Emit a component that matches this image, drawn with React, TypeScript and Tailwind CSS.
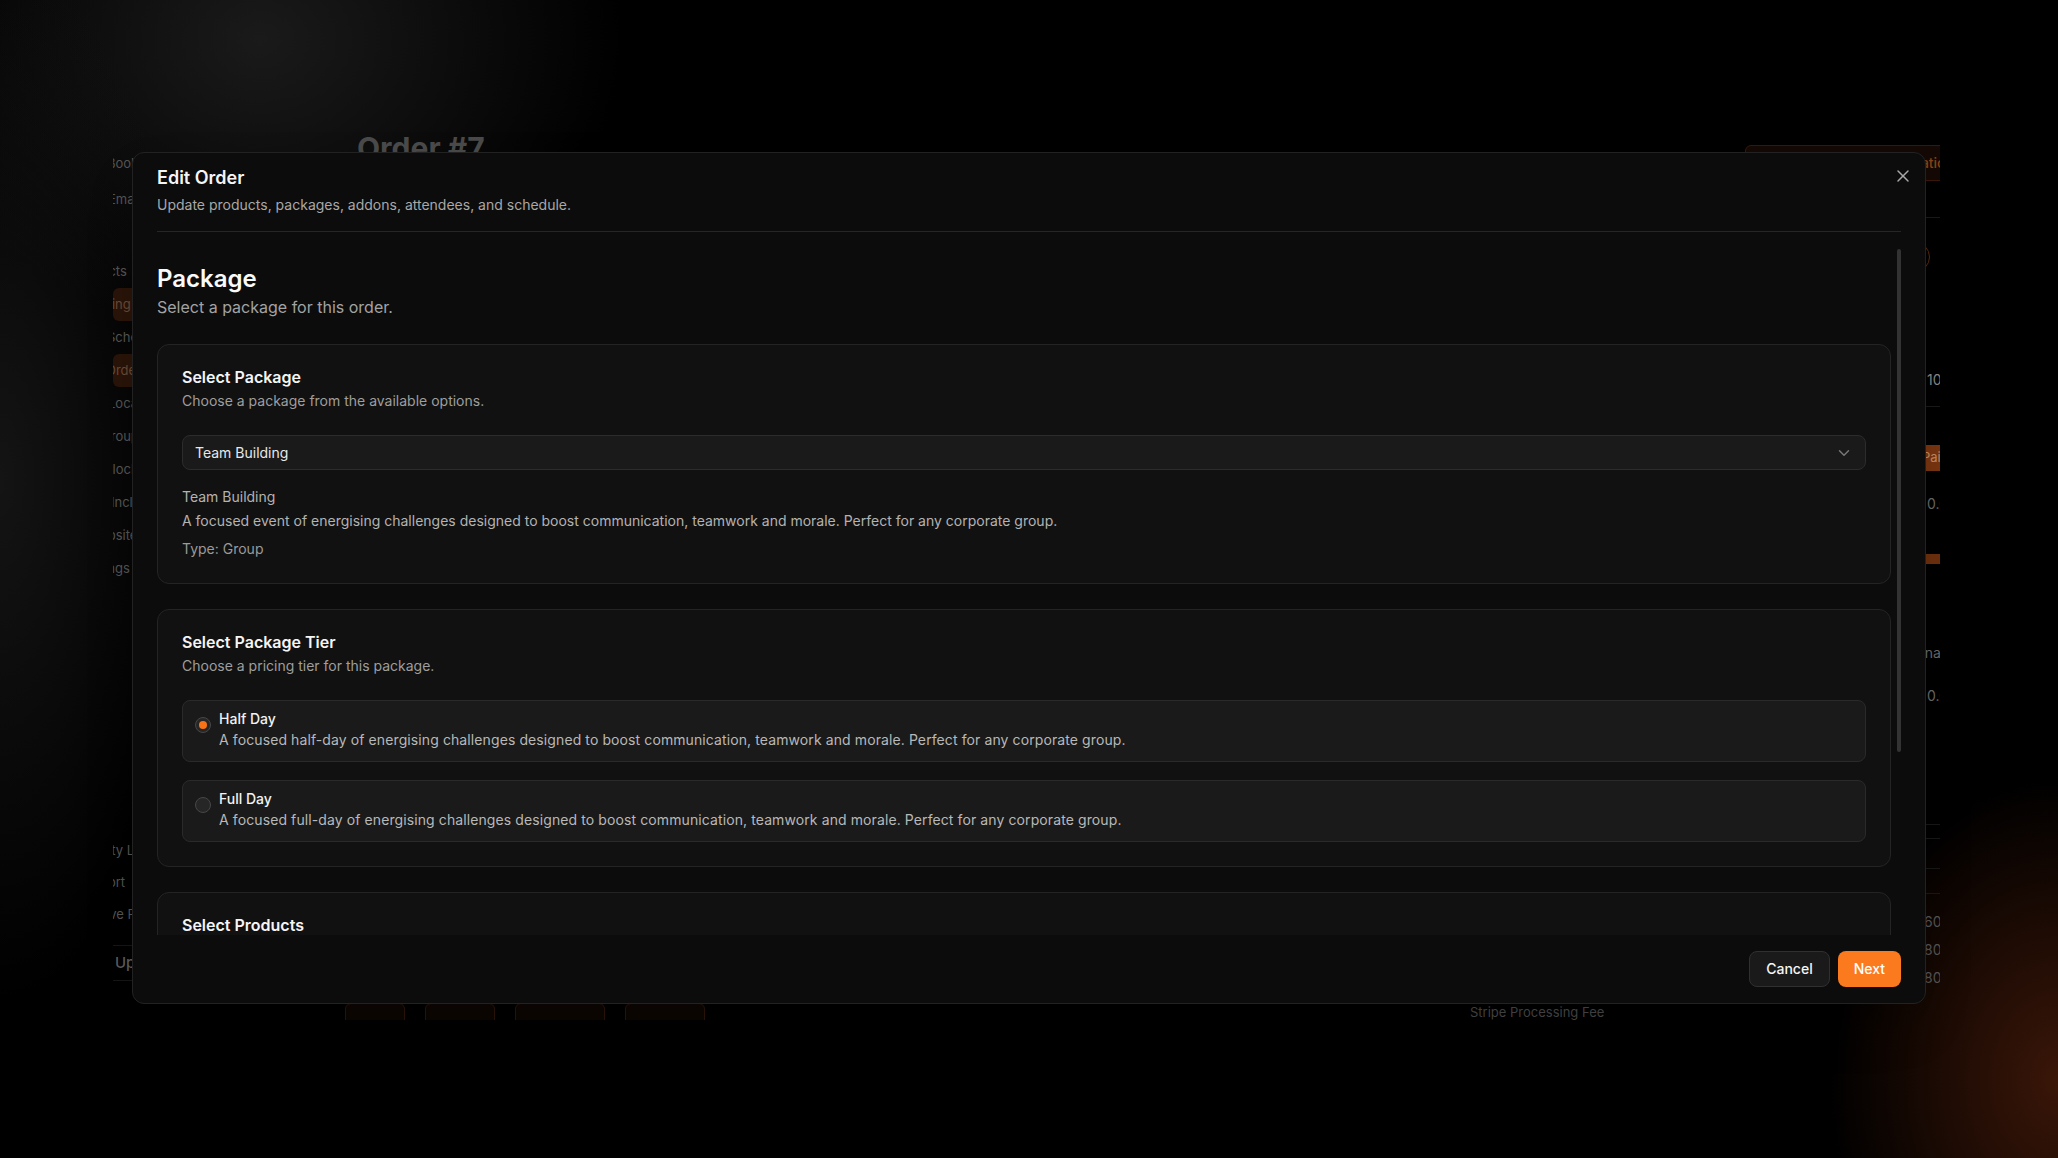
import { useState } from "react";
import { ChevronDown, X } from "lucide-react";

type NavItem = { label: string; shift: string; active?: boolean };

const NAV_TOP: NavItem[] = [
  { label: "Bookings", shift: "-ml-[8px]" },
  { label: "Emails", shift: "-ml-[7px]" },
];

const NAV_MAIN: NavItem[] = [
  { label: "Products", shift: "-ml-[43px]" },
  { label: "Pricing", shift: "-ml-[27px]", active: true },
  { label: "Schedule", shift: "-ml-[8px]" },
  { label: "Orders", shift: "-ml-[9px]", active: true },
  { label: "Locations", shift: "-ml-[7px]" },
  { label: "Groups", shift: "-ml-[14px]" },
  { label: "Blocks", shift: "-ml-[11px]" },
  { label: "Includes", shift: "-ml-[4px]" },
  { label: "Website", shift: "-ml-[27px]" },
  { label: "Settings", shift: "-ml-[35px]" },
];

const NAV_FOOT: NavItem[] = [
  { label: "Activity Log", shift: "-ml-[38px]" },
  { label: "Support", shift: "-ml-[39px]" },
  { label: "Leave Review", shift: "-ml-[28px]" },
];

const TIERS = [
  {
    id: "half",
    name: "Half Day",
    desc: "A focused half-day of energising challenges designed to boost communication, teamwork and morale. Perfect for any corporate group.",
  },
  {
    id: "full",
    name: "Full Day",
    desc: "A focused full-day of energising challenges designed to boost communication, teamwork and morale. Perfect for any corporate group.",
  },
];

function NavLabel({ item, h }: { item: NavItem; h: string }) {
  return (
    <div
      className={`flex items-center overflow-hidden whitespace-nowrap rounded-md text-[13px] ${h} ${
        item.active ? "bg-[#2a1409] text-[#6b4a36]" : "text-[#555555]"
      }`}
    >
      <span className={`pl-[2px] ${item.shift}`}>{item.label}</span>
    </div>
  );
}

// the page behind the dialog, dimmed by the overlay
function BackdropApp() {
  return (
    <div className="absolute left-[113px] top-[100px] flex h-[920px] w-[1827px] overflow-hidden">
      <aside className="w-[200px] shrink-0 pt-[46px]">
        {NAV_TOP.map((n) => (
          <NavLabel key={n.label} item={n} h="h-9" />
        ))}
        <div className="mt-[37px]">
          {NAV_MAIN.map((n) => (
            <NavLabel key={n.label} item={n} h="h-[33px]" />
          ))}
        </div>
        <div className="mt-[250px]">
          {NAV_FOOT.map((n) => (
            <NavLabel key={n.label} item={n} h="h-8" />
          ))}
        </div>
        <div className="mt-[14px] flex h-9 items-center border-y border-[#161616] pl-[2px] text-[15px] font-medium text-[#5e5e5e]">
          Upgrade
        </div>
      </aside>

      <main className="w-[1900px] shrink-0 pl-[44px] pt-[30px]">
        <div className="flex h-[60px] w-[1618px] items-start">
          <h1 className="text-3xl font-bold text-[#4a4a4a]">Order #7</h1>
          <div className="ml-auto mt-[15px] flex h-9 w-[230px] items-center justify-end rounded-md border border-[#3a170b] bg-[#140905] pr-[20px] text-sm font-medium text-[#8a4214]">
            Send Confirmation
          </div>
        </div>

        <div className="flex">
          <div className="w-[1563px] shrink-0">
            <div className="h-[813px]" />
            <div className="flex items-start">
              <div className="-ml-[12px] flex w-[1100px] gap-5">
                <div className="h-5 w-[60px] rounded-t-md border border-[#2e1509] bg-[#0d0603]" />
                <div className="h-5 w-[70px] rounded-t-md border border-[#2e1509] bg-[#0d0603]" />
                <div className="h-5 w-[90px] rounded-t-md border border-[#2e1509] bg-[#0d0603]" />
                <div className="h-5 w-[80px] rounded-t-md border border-[#2e1509] bg-[#0d0603]" />
              </div>
              <div className="pl-[25px] text-[13px] leading-[18px] text-[#4a4a4a]">
                Stripe Processing Fee
              </div>
            </div>
          </div>

          <div className="w-[300px] shrink-0 text-[14px] text-[#5a5a5a]">
            <div className="mt-[27px] h-px bg-[#1a1a1a]" />
            <div className="mt-[24px] h-[30px] w-[30px] -translate-x-[20px] rounded-full border border-[#5a2a0e]" />
            <div className="mt-[53px] h-[30px] w-[30px] -translate-x-[26px] rounded-full border border-[#2a1a10]" />
            <div className="mt-[14px] pl-[7px] text-[#8a8a8a]">10 attendees</div>
            <div className="mt-[16px] h-px bg-[#1a1a1a]" />
            <div className="mt-[38px] inline-flex h-[26px] items-center bg-[#7a3510] pl-[2px] pr-3 text-[13px] text-[#c58a60]">
              Paid
            </div>
            <div className="mt-[22px] pl-[7px] text-[#6a6a6a]">0.00</div>
            <div className="mt-[40px] h-[10px] w-[60px] bg-[#6e300d]" />
            <div className="mt-[78px] -ml-[7px] text-[#6a6a6a]">Financials</div>
            <div className="mt-[22px] pl-[7px] text-[#6a6a6a]">0.00</div>
            <div className="mt-[118px] h-px bg-[#181818]" />
            <div className="mt-[13px] h-px bg-[#181818]" />
            <div className="mt-[29px] h-px bg-[#181818]" />
            <div className="mt-[24px] h-px bg-[#181818]" />
            <div className="mt-[14px] pl-[4px] leading-[28px] text-[#555555]">600.00</div>
            <div className="pl-[4px] leading-[28px] text-[#555555]">800.00</div>
            <div className="pl-[4px] leading-[28px] text-[#555555]">800.00</div>
          </div>
        </div>
      </main>
    </div>
  );
}

export default function App() {
  const [tier, setTier] = useState("half");

  return (
    <div className="relative h-[1158px] w-[2058px] overflow-hidden bg-black font-[Inter,sans-serif]">
      <div className="pointer-events-none absolute inset-0 bg-[radial-gradient(ellipse_520px_420px_at_260px_40px,#1a1a1a_0%,transparent_70%)]" />
      <div className="pointer-events-none absolute inset-0 bg-[radial-gradient(ellipse_260px_700px_at_0px_480px,#141414_0%,transparent_75%)]" />
      <div className="pointer-events-none absolute inset-0 bg-[radial-gradient(ellipse_320px_420px_at_2058px_1080px,#3a1608_0%,transparent_72%)]" />

      <BackdropApp />

      <div className="absolute inset-0 flex items-center justify-center">
        <div className="relative mb-[2px] flex h-[852px] w-[1794px] flex-col rounded-xl border border-[#222222] bg-[#0c0c0c] shadow-2xl">
          <button
            type="button"
            aria-label="Close"
            className="absolute right-3 top-[13px] text-[#cfcfcf] opacity-80"
          >
            <X size={20} strokeWidth={1.75} />
          </button>

          <div className="px-6 pb-4 pt-[11px]">
            <h2 className="text-lg font-semibold leading-7 text-[#f5f5f5]">
              Edit Order
            </h2>
            <p className="mt-[3px] text-sm leading-5 text-[#a8a8a8]">
              Update products, packages, addons, attendees, and schedule.
            </p>
          </div>
          <div className="mx-6 h-px bg-[#262626]" />

          <div className="relative min-h-0 flex-1 overflow-hidden">
            <div className="pl-6 pr-[34px] pt-[31px]">
              <h3 className="text-2xl font-semibold leading-8 text-[#fafafa]">
                Package
              </h3>
              <p className="text-base leading-6 text-[#a3a3a3]">
                Select a package for this order.
              </p>

              <div className="mt-[25px] flex flex-col gap-[25px]">
                <section className="rounded-xl border border-[#242424] bg-[#111111] p-6">
                  <div className="text-base font-semibold leading-none text-[#f5f5f5]">
                    Select Package
                  </div>
                  <div className="mt-1.5 text-sm leading-5 text-[#9e9e9e]">
                    Choose a package from the available options.
                  </div>
                  <button
                    type="button"
                    className="mt-6 flex h-[35px] w-full items-center justify-between rounded-lg border border-[#2c2c2c] bg-[#1a1a1a] px-3 text-sm text-[#e8e8e8]"
                  >
                    <span>Team Building</span>
                    <ChevronDown size={18} className="text-[#777777]" />
                  </button>
                  <div className="mt-[17px] text-sm leading-5 text-[#b3b3b3]">
                    Team Building
                  </div>
                  <div className="mt-1 text-sm leading-5 text-[#b3b3b3]">
                    A focused event of energising challenges designed to boost
                    communication, teamwork and morale. Perfect for any
                    corporate group.
                  </div>
                  <div className="mt-2 text-sm leading-5 text-[#9a9a9a]">
                    Type: Group
                  </div>
                </section>

                <section className="rounded-xl border border-[#242424] bg-[#111111] p-6">
                  <div className="text-base font-semibold leading-none text-[#f5f5f5]">
                    Select Package Tier
                  </div>
                  <div className="mt-1.5 text-sm leading-5 text-[#9e9e9e]">
                    Choose a pricing tier for this package.
                  </div>
                  <div className="mt-6 flex flex-col gap-[18px]">
                    {TIERS.map((t) => {
                      const on = t.id === tier;
                      return (
                        <label
                          key={t.id}
                          onClick={() => setTier(t.id)}
                          className="flex cursor-pointer items-start gap-2 rounded-lg border border-[#2a2a2a] bg-[#1a1a1a] px-3 pb-[11px] pt-[11px]"
                        >
                          <span className="mt-[5px] flex h-4 w-4 shrink-0 items-center justify-center rounded-full border border-[#474747] bg-[#262626]">
                            {on && (
                              <span className="h-2 w-2 rounded-full bg-[#f97316]" />
                            )}
                          </span>
                          <span className="flex flex-col">
                            <span className="text-sm font-medium leading-none text-[#f2f2f2]">
                              {t.name}
                            </span>
                            <span className="mt-1 text-sm leading-5 tracking-[0.1px] text-[#b8b8b8]">
                              {t.desc}
                            </span>
                          </span>
                        </label>
                      );
                    })}
                  </div>
                </section>

                <section className="h-[200px] rounded-xl border border-[#242424] bg-[#111111] p-6">
                  <div className="text-base font-semibold leading-none text-[#f5f5f5]">
                    Select Products
                  </div>
                </section>
              </div>
            </div>
            <div className="absolute right-6 top-[17px] h-[503px] w-[4px] rounded-full bg-[#333333]" />
          </div>

          <div className="flex justify-end gap-2 px-6 py-4">
            <button
              type="button"
              className="h-9 rounded-lg border border-[#303030] bg-[#1a1a1a] px-4 text-sm font-medium text-[#f5f5f5]"
            >
              Cancel
            </button>
            <button
              type="button"
              className="h-9 rounded-lg bg-[#fb7a1e] px-4 text-sm font-medium text-white"
            >
              Next
            </button>
          </div>
        </div>
      </div>
    </div>
  );
}
